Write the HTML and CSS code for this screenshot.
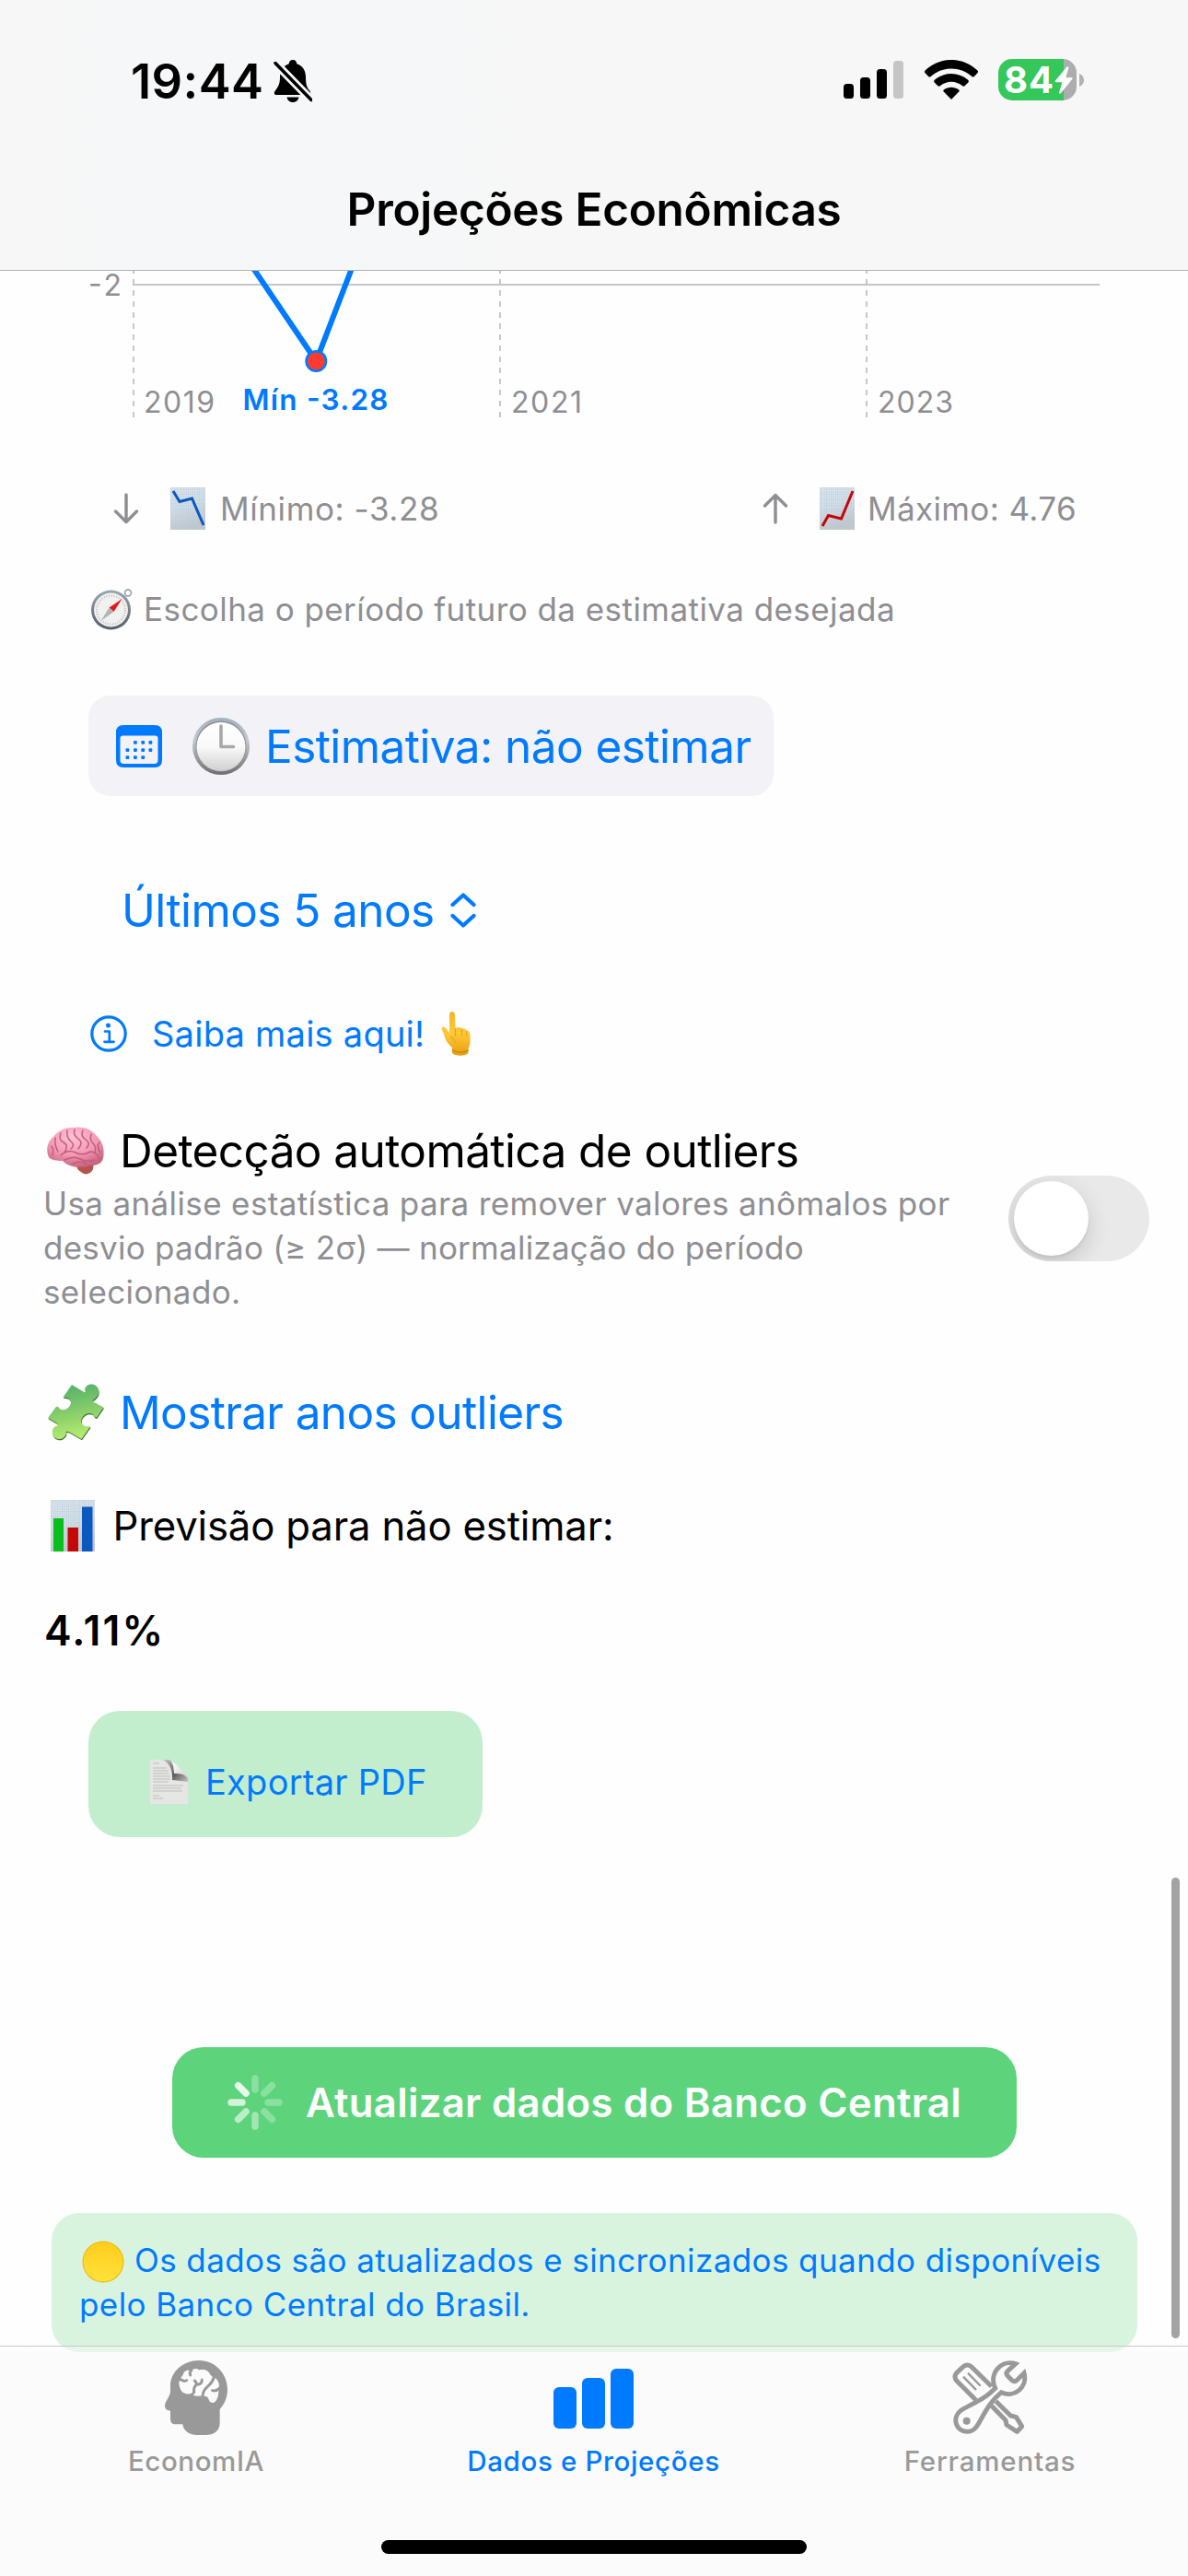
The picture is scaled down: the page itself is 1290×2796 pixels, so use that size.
FILE: index.html
```html
<!DOCTYPE html>
<html lang="pt-BR">
<head>
<meta charset="utf-8">
<title>Projeções Econômicas</title>
<link rel="stylesheet" href="styles.css">
</head>
<body>
<div class="screen">
  <header class="header">
    <div class="status">
      <span class="time">19:44</span>
      <svg class="bell" width="42" height="46" viewBox="0 0 42 46">
        <path d="M21 0c3 0 4 2 4.300 4.300C32 6.500 35 12 35 19c0 9 2 12 4.500 15 1.500 2 .5 4-1.800 4H3.300C1 38 0 36 1.500 34 4.500 30 7 27 7 19c0-7 3.500-12.500 9.700-14.700C17 2 18 0 21 0z"/>
        <path d="M14.500 40.500h13c-.6 3.300-3.200 5.500-6.500 5.500s-5.900-2.200-6.500-5.500z"/>
        <path class="bell-gap" d="M2 3.500 41 43.500"/>
        <path class="bell-slash" d="M2 3.500 41 43.500"/>
      </svg>
      <span class="grow"></span>
      <svg class="signal" width="65" height="41" viewBox="0 0 65 41">
        <rect x="0" y="25" width="11" height="16" rx="3.500"/>
        <rect x="18" y="18" width="11" height="23" rx="3.500"/>
        <rect x="36" y="9" width="11" height="32" rx="3.500"/>
        <rect class="off" x="54" y="0" width="11" height="41" rx="3.500"/>
      </svg>
      <svg class="wifi" width="58" height="43" viewBox="0 0 58 43">
        <path d="M29 43 20.700 34.600c-.6-.6-.6-1.600.1-2.100 5-3.700 11.400-3.700 16.400 0 .7.500.7 1.500.1 2.100z"/>
        <path d="M10.700 24.500c-.8-.8-.7-2 .1-2.700 10.700-9 25.700-9 36.400 0 .8.700.9 1.900.1 2.700l-3.500 3.600c-.7.700-1.800.8-2.600.1-7.300-6-17.100-6-24.400 0-.8.700-1.900.6-2.600-.1z"/>
        <path d="M.6 14.300c-.8-.8-.8-2 0-2.700C16.500-3.900 41.500-3.900 57.400 11.600c.8.700.8 1.900 0 2.700L53.900 18c-.7.700-1.900.7-2.600 0-12.800-11.300-31.800-11.300-44.600 0-.7.700-1.900.7-2.600 0z"/>
      </svg>
      <div class="battery">
        <span class="level">84</span>
        <svg class="bolt" width="20" height="30" viewBox="0 0 20 30"><path d="M13.500.5 1 15.500c-.6.8-.2 1.700.8 1.700h6.700L5 28.300c-.4 1.300.9 1.900 1.800.9L19.300 14c.6-.8.2-1.700-.8-1.700h-6.200l3-10.500c.3-1.300-.9-2.200-1.800-1.300z"/></svg>
        <svg class="nub" width="5" height="14" viewBox="0 0 5 14"><path d="M0 0c3.500 1.500 5 4 5 7s-1.500 5.500-5 7z"/></svg>
      </div>
    </div>
    <h1 class="title">Projeções Econômicas</h1>
  </header>

  <main class="content">
    <svg class="chart" width="1290" height="160" viewBox="0 294 1290 160">
      <defs><clipPath id="plot"><rect x="144" y="294" width="1050" height="160"/></clipPath></defs>
      <path class="grid-x" d="M144 309H1194"/>
      <g clip-path="url(#plot)">
        <path class="grid-y" d="M145 291V453M543 291V453M941 291V453"/>
        <path class="series" d="M206.500 190 343.300 392 407.500 225"/>
      </g>
      <circle class="point" cx="343.300" cy="392" r="10.700"/>
      <text class="axis" x="96" y="321" textLength="36">-2</text>
      <text class="axis" x="156" y="448" textLength="77">2019</text>
      <text class="axis" x="555" y="448" textLength="77">2021</text>
      <text class="axis" x="953" y="448" textLength="82">2023</text>
      <text class="mark" x="263.500" y="444.500" textLength="158">Mín -3.28</text>
    </svg>

    <div class="stats">
      <div class="stat stat-min">
        <svg width="28" height="34" viewBox="0 0 28 34"><path class="arrow" d="M14 2V31M2.500 20 14 31.500 25.500 20"/></svg>
        <svg class="sheet" width="38" height="46" viewBox="0 0 38 46">
          <defs><linearGradient id="paper" x1="0" y1="0" x2=".3" y2="1"><stop offset="0" stop-color="#dce8f1"/><stop offset=".5" stop-color="#d3e1ec"/><stop offset="1" stop-color="#c2c9cf"/></linearGradient>
          <pattern id="mesh" width="2.400" height="2.400" patternUnits="userSpaceOnUse"><path d="M0 0H2.400M0 0V2.400" stroke="#b4c2ce" stroke-width=".6"/></pattern></defs>
          <rect width="38" height="46" fill="url(#paper)"/><rect width="38" height="46" fill="url(#mesh)"/>
          <path d="M3 4 10 15.500 23.500 12 36 41" fill="none" stroke="#0a56c2" stroke-width="3"/>
        </svg>
        <span>Mínimo: -3.28</span>
      </div>
      <div class="stat stat-max">
        <svg width="28" height="34" viewBox="0 0 28 34"><path class="arrow" d="M14 32V3M2.500 14 14 2.500 25.500 14"/></svg>
        <svg class="sheet" width="38" height="46" viewBox="0 0 38 46">
          <rect width="38" height="46" fill="url(#paper)"/><rect width="38" height="46" fill="url(#mesh)"/>
          <path d="M3 42 9.500 30.500 23.500 34 36 4" fill="none" stroke="#c40606" stroke-width="3"/>
        </svg>
        <span>Máximo: 4.76</span>
      </div>
    </div>

    <p class="hint">
      <svg width="45" height="45" viewBox="0 0 45 45">
        <defs><linearGradient id="rim" x1="0" y1="0" x2="0" y2="1"><stop offset="0" stop-color="#9aa6b4"/><stop offset="1" stop-color="#555d68"/></linearGradient></defs>
        <circle cx="40" cy="4.500" r="3.400" fill="none" stroke="#8c98a4" stroke-width="1.500"/>
        <circle cx="21.500" cy="23" r="21.500" fill="url(#rim)"/><circle cx="21.500" cy="23" r="18.500" fill="#f1f1ef"/>
        <circle cx="21.500" cy="23" r="15.500" fill="none" stroke="#bbb" stroke-width="2" stroke-dasharray="1 1.700"/>
        <path d="M33.500 11 19.500 20.500 24.500 25z" fill="#e21b1b"/><path d="M10.500 35 19.500 20.500 24.500 25z" fill="#b4b5b3"/>
      </svg>
      <span>Escolha o período futuro da estimativa desejada</span>
    </p>

    <button class="estimate">
      <svg width="50" height="46" viewBox="0 0 50 46">
        <path fill-rule="evenodd" d="M8 0H42Q50 0 50 8V38Q50 46 42 46H8Q0 46 0 38V8Q0 0 8 0ZM7.500 11.500Q4.500 11.500 4.500 14.500V38Q4.500 42 8.500 42H41.500Q45.500 42 45.500 38V14.500Q45.500 11.500 42.500 11.500Z"/>
        <g><rect x="19" y="17" width="3.800" height="3.800" rx="1"/><rect x="27.300" y="17" width="3.800" height="3.800" rx="1"/><rect x="35.500" y="17" width="3.800" height="3.800" rx="1"/><rect x="10.500" y="25.200" width="3.800" height="3.800" rx="1"/><rect x="19" y="25.200" width="3.800" height="3.800" rx="1"/><rect x="27.300" y="25.200" width="3.800" height="3.800" rx="1"/><rect x="35.500" y="25.200" width="3.800" height="3.800" rx="1"/><rect x="10.500" y="33.200" width="3.800" height="3.800" rx="1"/><rect x="19" y="33.200" width="3.800" height="3.800" rx="1"/><rect x="27.300" y="33.200" width="3.800" height="3.800" rx="1"/></g>
      </svg>
      <svg class="clock" width="62" height="62" viewBox="0 0 62 62">
        <defs><linearGradient id="cr" x1="0" y1="0" x2="0" y2="1"><stop offset="0" stop-color="#a3b0bf"/><stop offset=".4" stop-color="#c4c8cc"/><stop offset="1" stop-color="#6e6e6e"/></linearGradient>
        <linearGradient id="cf" x1="0" y1="0" x2="0" y2="1"><stop offset="0" stop-color="#fff"/><stop offset=".5" stop-color="#fafafa"/><stop offset="1" stop-color="#cfcfcf"/></linearGradient></defs>
        <circle cx="31" cy="31" r="31" fill="url(#cr)"/><circle cx="31" cy="31" r="27.500" fill="#8b9096"/><circle cx="31" cy="31.500" r="26.500" fill="url(#cf)"/>
        <path d="M31 9V31.500H44.500" fill="none" stroke="#a9a8a6" stroke-width="3.600" stroke-linecap="round" stroke-linejoin="round"/>
      </svg>
      <span>Estimativa: não estimar</span>
    </button>

    <div class="picker">
      <span>Últimos 5 anos</span>
      <svg width="28" height="38" viewBox="0 0 28 38"><path class="chev" d="M2.500 13 14 2.500 25.500 13M2.500 25 14 35.500 25.500 25"/></svg>
    </div>

    <a class="more">
      <svg width="40" height="40" viewBox="0 0 40 40">
        <circle cx="20" cy="20" r="18.200" fill="none" stroke="currentColor" stroke-width="3.200"/>
        <circle cx="19.500" cy="11" r="2.500"/>
        <path d="M16 17.500H20.800V28.300M15.500 28.800H25.500" fill="none" stroke="currentColor" stroke-width="2.700" stroke-linecap="round" stroke-linejoin="round"/>
      </svg>
      <span>Saiba mais aqui!</span>
      <svg class="finger" width="32" height="48" viewBox="0 0 32 48">
        <defs><linearGradient id="skin" x1="0" y1="0" x2="0" y2="1"><stop offset="0" stop-color="#f3b52b"/><stop offset=".5" stop-color="#ffc937"/><stop offset="1" stop-color="#e59d10"/></linearGradient></defs>
        <path d="M9 3Q9.300 0 12 0T15 3.500L15.500 18Q20 16 22.500 18.500 26 17.500 27.500 20.500 31 20.500 31.500 25V33C31.500 37 30 38 29.500 41V45C27 48.500 15 48.500 12 45V39C9 36 6 34 4.500 29L.5 18Q1.500 15.500 5 18L9 23z" fill="url(#skin)"/>
        <path d="M15.500 18V27M22.500 19V27M27.500 21V27M10 27Q14 29 16 34" fill="none" stroke="#e8a51f" stroke-width="1.200"/><path d="M12 42Q21 46.500 29.500 42" fill="none" stroke="#d28a08" stroke-width="1.500"/>
      </svg>
    </a>

    <section class="outliers">
      <div class="outliers-text">
        <h2 class="outliers-title">
          <svg width="62" height="52" viewBox="0 0 62 52">
            <defs><radialGradient id="br" cx=".45" cy=".25" r=".75"><stop offset="0" stop-color="#ffc3d3"/><stop offset=".6" stop-color="#f397b2"/><stop offset="1" stop-color="#c8647f"/></radialGradient></defs>
            <path d="M35 36C46 34 52 38 50 46 47 52 41 53 37 49 33 47 30 43 35 36Z" fill="#b5544f"/>
            <path d="M2 33C-2 25 1 15 7 11 12 4 21 0 30 1 42-1 50 5 53 9 60 15 63 24 61 34 59 42 51 42 47 42 40 45 24 45 17 37 11 37 4 36 2 33Z" fill="url(#br)"/>
            <path d="M9 12Q8 20 12 27M15 7Q12 14 18 17T19 28M22 4Q21 12 26 16T26 24M30 3Q28 9 34 13T34 24M39 4Q36 10 42 14T43 23M48 8Q46 14 50 18T52 28M57 17Q53 20 58 28M5 21Q8 25 6 31M15 31Q23 24 31 28T47 27Q54 27 57 35M19 36Q29 31 36 35T51 36M28 40Q36 36 43 40" fill="none" stroke="#c25c81" stroke-width="1.500" stroke-linecap="round"/>
          </svg>
          <span>Detecção automática de outliers</span>
        </h2>
        <p class="outliers-sub">Usa análise estatística para remover valores anômalos por <span class="tight">desvio padrão (≥ 2σ) — normalização do período</span> selecionado.</p>
      </div>
      <div class="toggle"><span class="knob"></span></div>
    </section>

    <a class="show">
      <svg width="62" height="62" viewBox="0 0 62 62">
        <defs><linearGradient id="pz" x1=".3" y1="0" x2=".5" y2="1"><stop offset="0" stop-color="#4fb06a"/><stop offset=".5" stop-color="#85cc6a"/><stop offset="1" stop-color="#b9ee70"/></linearGradient></defs>
        <path d="M27 1 39.500 8.500C42 10.500 42.500 8 41 6 43-2 55-1 56 7 57 14 51 17 50 17.500 49 20 51 20 53 21L61.500 25.500 54 36.500C52 37 51 35.500 50 33 42 29 35 38 38 43.500 42 48 45 45 47 46.500L37.500 60 24.500 52.500C22 51 20 52 21 54 18 63 7 61 6 54 5 48 9 46 11.500 45.500 13 44 11 43 9.500 42L1 37 9.500 25.500C11 24 13 25 13.500 27 19 31 26 25 26 20 25 14 20 15 17.500 14.500Z" fill="#3e6b36" transform="translate(.5 1.300)"/>
        <path d="M27 1 39.500 8.500C42 10.500 42.500 8 41 6 43-2 55-1 56 7 57 14 51 17 50 17.500 49 20 51 20 53 21L61.500 25.500 54 36.500C52 37 51 35.500 50 33 42 29 35 38 38 43.500 42 48 45 45 47 46.500L37.500 60 24.500 52.500C22 51 20 52 21 54 18 63 7 61 6 54 5 48 9 46 11.500 45.500 13 44 11 43 9.500 42L1 37 9.500 25.500C11 24 13 25 13.500 27 19 31 26 25 26 20 25 14 20 15 17.500 14.500Z" fill="url(#pz)"/>
      </svg>
      <span>Mostrar anos outliers</span>
    </a>

    <p class="forecast">
      <svg width="48" height="56" viewBox="0 0 48 56">
        <rect width="48" height="56" fill="url(#paper)"/><rect width="48" height="56" fill="url(#mesh)"/>
        <rect x="3" y="20" width="11" height="36" fill="#0abf1b"/><rect x="18.500" y="30" width="11.500" height="26" fill="#c40808"/><rect x="34" y="7.500" width="11.500" height="48.500" fill="#0b58be"/>
      </svg>
      <span>Previsão para não estimar:</span>
    </p>
    <p class="value">4.11%</p>

    <button class="export">
      <svg width="41" height="48" viewBox="0 0 41 48">
        <defs><linearGradient id="fold" x1=".2" y1=".1" x2=".8" y2=".9"><stop offset="0" stop-color="#fff"/><stop offset="1" stop-color="#d4d4d4"/></linearGradient>
        <linearGradient id="shade" x1="0" y1="0" x2="1" y2="1"><stop offset="0" stop-color="#c9c9c9"/><stop offset=".55" stop-color="#5a5a5a"/><stop offset="1" stop-color="#c4c4c4"/></linearGradient></defs>
        <path d="M0 0H20Q26 1 26 14 40 14 41 21V48H0Z" fill="#e6e6e4"/>
        <path d="M14 0H20Q26 1 26 14 40 14 41 21V24L24 22Q25 6 14 0Z" fill="url(#shade)"/>
        <path d="M20 0Q26 2 26 15 38 14 41 21 39 14 32 9 26 3 20 0Z" fill="url(#fold)"/>
        <path d="M3 4H10M3 9H18M3 12H20M3 15H20M3 18H22M3 21H22M3 24H20M3 28H36M3 31H34M3 34H35M3 39H10M3 42H14" stroke="#bdbdbd" stroke-width="1"/>
      </svg>
      <span>Exportar PDF</span>
    </button>

    <button class="update">
      <svg width="60" height="60" viewBox="-30 -30 60 60">
        <g stroke="#fff" stroke-width="7.400" stroke-linecap="round">
          <path d="M0-14V-26" opacity=".28"/><path d="M0-14V-26" opacity=".28" transform="rotate(45)"/><path d="M0-14V-26" opacity=".28" transform="rotate(90)"/><path d="M0-14V-26" opacity=".28" transform="rotate(135)"/><path d="M0-14V-26" opacity=".42" transform="rotate(180)"/><path d="M0-14V-26" opacity=".58" transform="rotate(225)"/><path d="M0-14V-26" opacity=".72" transform="rotate(270)"/><path d="M0-14V-26" opacity=".86" transform="rotate(315)"/>
        </g>
      </svg>
      <span>Atualizar dados do Banco Central</span>
    </button>

    <div class="notice">
      <svg class="disc" width="46" height="46" viewBox="0 0 46 46">
        <defs><linearGradient id="sun" x1="0" y1="0" x2="0" y2="1"><stop offset="0" stop-color="#ffcd1c"/><stop offset="1" stop-color="#ffe23a"/></linearGradient></defs>
        <circle cx="23" cy="23" r="22.500" fill="#f0b90f"/><circle cx="23" cy="23" r="21.300" fill="url(#sun)"/>
      </svg><span>Os dados são atualizados e sincronizados quando disponíveis pelo Banco Central do Brasil.</span>
    </div>
  </main>

  <div class="scrollbar"></div>

  <nav class="tabs">
    <div class="tab tab-a">
      <svg width="68" height="81" viewBox="27 36 204 243">
        <path d="M139 36C190 36 231 78 231 131 231 155 222 177 206 195V240C206 266 185 279 160 279H132C105 279 87 264 85 244H62C50 244 45 238 45 225V200C35 200 27 194 27 184 27 170 40 160 45 140V120C45 72 87 36 139 36Z"/>
        <path class="cut" d="M87 82C88 70 102 66 112 70 116 62 132 60 138 67 155 63 170 68 176 84 186 90 186 94 190 92 202 100 207 118 202 128 204 145 198 174 182 174 168 173 172 158 163 154 150 148 136 155 120 150 124 146 122 140 121 136 112 150 90 148 80 134 72 120 72 108 76 97Z"/>
        <path class="fold" d="M76 97Q90 107 98 101M114 68Q106 74 110 84M187 86C186 120 150 118 150 154M124 102Q134 110 127 118T122 140M148 99Q148 114 132 115M206 126Q192 138 182 134"/>
      </svg>
      <span>EconomIA</span>
    </div>
    <div class="tab tab-b active">
      <svg width="88" height="65" viewBox="0 0 88 65"><rect x="0" y="20" width="25" height="45" rx="6"/><rect x="31" y="10" width="25" height="55" rx="6"/><rect x="62" y="0" width="25" height="65" rx="6"/></svg>
      <span>Dados e Projeções</span>
    </div>
    <div class="tab tab-c">
      <svg width="82" height="81" viewBox="398 131 246 243">
        <g fill="none" stroke="currentColor" stroke-width="15" stroke-linejoin="round">
          <path d="M475 260 412 197Q402 184 412 172L432 153Q445 140 460 151L526 216"/>
          <path d="M526 279 572 326 575 341 609 363 625 346 606 315 588 311 540 264"/>
          <path stroke-linejoin="miter" d="M604 142C560 127 515 172 538 222 520 240 500 255 477 266 450 281 435 287 425 295 396 318 410 362 446 363 470 363 480 345 492 322 510 290 525 262 558 235 600 255 645 218 632 172L608 196Q600 202 592 195L578 181Q571 172 579 165Z"/>
          <path stroke-width="7" stroke-linecap="round" d="M451 174 488 212M436 186 474 225"/>
        </g>
        <circle cx="445" cy="328" r="12"/>
      </svg>
      <span>Ferramentas</span>
    </div>
  </nav>
  <div class="home"></div>
</div>
</body>
</html>
```
FILE: styles.css
```css
* { box-sizing: border-box; margin: 0; padding: 0; }

body {
  width: 1290px;
  height: 2796px;
  overflow: hidden;
  background: #fefefe;
  color: #000;
  font-family: Inter, "Liberation Sans", sans-serif;
}

svg { flex: none; display: block; }
button { border: 0; font: inherit; }
span { white-space: nowrap; }

.screen { position: relative; width: 1290px; height: 2796px; overflow: hidden; }

/* Header */
.header {
  height: 294px;
  background: linear-gradient(90deg, #f7f7f7 0, #f5f7f9 20%, #f6f7f8 36%, #f7f7f7 50%);
  border-bottom: 1px solid #b2b2b3;
}
.status { display: flex; height: 177px; padding: 0 113px 0 142px; align-items: flex-start; }
.time { height: 38px; margin-top: 69px; line-height: 38px; font-size: 52.5px; font-weight: 600; letter-spacing: .38px; }
.bell { margin: 65px 0 0 11px; }
.bell-gap { fill: none; stroke: #f6f7f9; stroke-width: 9; }
.bell-slash { fill: none; stroke: #000; stroke-width: 3.5; stroke-linecap: round; }
.grow { flex: 1; }
.signal { margin-top: 66px; }
.signal .off { fill: #c5c5c5; }
.wifi { margin: 65px 0 0 23px; }
.battery {
  position: relative;
  display: flex;
  align-items: center;
  width: 85px;
  height: 45px;
  margin: 64px 8px 0 22px;
  padding-left: 6px;
  border-radius: 15px;
  background: linear-gradient(90deg, #34c759 71px, #adadad 71px);
  color: #fff;
}
.level { font-size: 40px; font-weight: 700; letter-spacing: .96px; }
.bolt { position: absolute; left: 61px; top: 8px; fill: #fff; }
.nub { position: absolute; left: 88px; top: 16px; fill: #b2b2b2; }
.title { height: 100px; line-height: 100px; text-align: center; font-size: 49.5px; font-weight: 600; letter-spacing: -.28px; }

/* Chart */
.content { display: flex; flex-direction: column; align-items: flex-start; }
.chart { overflow: visible; }
.grid-x { stroke: #c6c6c7; stroke-width: 2; }
.grid-y { fill: none; stroke: #c8c8c9; stroke-width: 2; stroke-dasharray: 6 6; }
.series { fill: none; stroke: #007aff; stroke-width: 6; }
.point { fill: #ff3b30; stroke: #007aff; stroke-width: 2.6; }
.axis { fill: #8e8e93; font-size: 32px; }
.mark { fill: #007aff; font-size: 31.5px; font-weight: 600; }

.stats { display: flex; justify-content: space-between; width: 1290px; height: 60px; margin-top: 68px; padding: 0 121px 0 123px; }
.stat { display: flex; align-items: center; color: #8e8e93; font-size: 35px; }
.stat-min { letter-spacing: .6px; }
.stat-max { letter-spacing: .39px; }
.arrow { fill: none; stroke: #8e8e93; stroke-width: 3.4; stroke-linecap: round; stroke-linejoin: round; }
.sheet { margin: 0 14px 0 34px; }
.stat-min .sheet { margin-right: 16px; }

.hint { display: flex; align-items: center; gap: 12px; height: 60px; margin: 49px 0 0 99px; color: #8e8e93; font-size: 35px; letter-spacing: .44px; }

.estimate {
  display: flex;
  align-items: center;
  width: 744px;
  height: 109px;
  margin: 64px 0 0 96px;
  padding-left: 30px;
  border-radius: 24px;
  background: #f2f2f7;
  color: #007aff;
  fill: #007aff;
  font-size: 49.5px;
  letter-spacing: -.57px;
}
.clock { margin: 0 17px 0 33px; }

.picker { display: flex; align-items: center; gap: 17px; height: 60px; margin: 94px 0 0 132px; color: #007aff; font-size: 49.5px; letter-spacing: -.58px; }
.chev { fill: none; stroke: #007aff; stroke-width: 4.2; stroke-linecap: round; stroke-linejoin: round; }

.more { display: flex; align-items: center; height: 60px; margin: 74px 0 0 98px; color: #007aff; fill: #007aff; font-size: 38px; letter-spacing: .24px; }
.more span { margin-left: 27px; }
.finger { margin-left: 18px; }

/* Outlier detection */
.outliers { display: flex; align-items: center; justify-content: space-between; width: 1290px; margin-top: 67px; padding: 0 42px 0 48px; }
.outliers-title { display: flex; align-items: center; gap: 17px; height: 60px; padding-left: 3px; font-size: 49.5px; font-weight: 400; letter-spacing: -.59px; }
.outliers-sub { width: 1000px; margin: 3px 0 0 -1px; color: #8e8e93; font-size: 35px; line-height: 48px; letter-spacing: .37px; }
.tight { letter-spacing: .25px; }
.toggle { width: 153px; height: 93px; padding: 6px; border-radius: 47px; background: linear-gradient(90deg, #e4e4e5, #e9e9ea 60%); overflow: hidden; }
.knob { display: block; width: 81px; height: 81px; border-radius: 50%; background: #fff; box-shadow: 0 9px 24px rgba(0,0,0,.15), 0 3px 3px rgba(0,0,0,.05); }

.show { display: flex; align-items: center; gap: 17px; height: 60px; margin: 77px 0 0 51px; color: #007aff; font-size: 49.5px; letter-spacing: -.63px; }
.forecast { display: flex; align-items: center; gap: 19.5px; height: 60px; margin: 63px 0 0 55px; font-size: 43.7px; letter-spacing: -.18px; }
.value { height: 60px; margin: 54px 0 0 48px; line-height: 60px; font-size: 44.5px; font-weight: 600; letter-spacing: 2.1px; }

/* Buttons */
.export {
  display: flex;
  align-items: center;
  gap: 19px;
  width: 428px;
  height: 137px;
  margin: 57px 0 0 96px;
  padding: 17px 0 0 67px;
  border-radius: 34px;
  background: #c3eece;
  color: #007aff;
  font-size: 38px;
  letter-spacing: .26px;
}
.update {
  display: flex;
  align-items: center;
  gap: 25px;
  width: 917px;
  height: 120px;
  margin: 228px 0 0 187px;
  padding-left: 60px;
  border-radius: 34px;
  background: #5dd47b;
  color: #fff;
  font-size: 43.7px;
  font-weight: 600;
  letter-spacing: .3px;
}
.notice {
  width: 1179px;
  height: 151px;
  margin: 60px 0 0 56px;
  padding: 27px 30px 0;
  border-radius: 30px;
  background: #d8f4df;
  color: #007aff;
  font-size: 35px;
  line-height: 48px;
  letter-spacing: .41px;
}
.notice span { white-space: normal; }
.disc { display: inline-block; margin: -10px 11px -10px 3px; vertical-align: -2px; }

.scrollbar { position: absolute; left: 1272px; top: 2038px; width: 9px; height: 500px; border-radius: 5px; background: #a3a3a3; }

/* Tab bar, translucent over the scrolled content */
.tabs {
  position: absolute;
  left: 0;
  bottom: 0;
  display: flex;
  width: 1290px;
  height: 250px;
  border-top: 1px solid rgba(0,0,0,.2);
  background: linear-gradient(rgba(251,251,251,.4) 0, rgba(251,251,251,.4) 7px, #fbfbfb 7px);
}
.tab { display: flex; flex-direction: column; align-items: center; color: #999; fill: #999; font-size: 29.5px; font-weight: 500; }
.tab-a { width: 426px; letter-spacing: .58px; }
.tab-b { width: 437px; letter-spacing: .65px; }
.tab-c { width: 424px; letter-spacing: .83px; }
.tab svg { margin-top: 15px; }
.tab span { height: 40px; line-height: 40px; }
.tab-a span, .tab-c span { margin-top: 8px; }
.tab-b svg { margin-top: 24px; }
.tab-b span { margin-top: 15px; }
.active { color: #007aff; fill: #007aff; }
.cut { fill: #fbfbfb; }
.fold { fill: none; stroke: #999; stroke-width: 9; stroke-linecap: round; }
.home { position: absolute; left: 414px; bottom: 24px; width: 462px; height: 15px; border-radius: 8px; background: #000; }
```
